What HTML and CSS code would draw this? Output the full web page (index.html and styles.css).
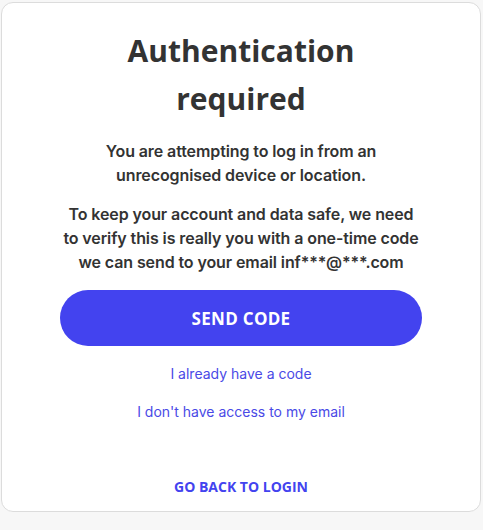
FILE: index.html
```html
<!DOCTYPE html>
<html lang="en">
<head>
<meta charset="utf-8">
<title>Authentication required</title>
<link rel="stylesheet" href="styles.css">
</head>
<body>
<main class="card">
  <h1 class="title">Authentication required</h1>
  <p class="text">You are attempting to log in from an unrecognised device or location.</p>
  <p class="text">To keep your account and data safe, we need to verify this is really you with a one-time code we can send to your email inf***@***.com</p>
  <button class="btn" type="button">SEND CODE</button>
  <a class="link" href="#">I already have a code</a>
  <a class="link link-second" href="#">I don't have access to my email</a>
  <a class="back" href="#">GO BACK TO LOGIN</a>
</main>
</body>
</html>
```
FILE: styles.css
```css
html, body {
  margin: 0;
  background: #f7f7f7;
}
body {
  padding: 2px 2px 0 1px;
  font-family: Inter, "Noto Sans", sans-serif;
  color: #333;
}
.card {
  box-sizing: border-box;
  width: 480px;
  height: 510px;
  background: #fff;
  border: 1px solid #dcdcdc;
  border-radius: 12px;
  padding: 24px 59px 0;
  display: flex;
  flex-direction: column;
  align-items: center;
  text-align: center;
}
.title {
  margin: 0 0 16px;
  width: 260px;
  font-family: "Open Sans", sans-serif;
  font-weight: 700;
  font-size: 30px;
  line-height: 48px;
  color: #333;
}
.text {
  margin: 0 0 15px;
  font-size: 16px;
  line-height: 24px;
  font-weight: 600;
  letter-spacing: -0.1px;
  color: #333;
}
.btn {
  margin-top: 1px;
  width: 362px;
  height: 56px;
  border: 0;
  border-radius: 28px;
  background: #4343ef;
  color: #fff;
  font-family: "Open Sans", sans-serif;
  font-weight: 700;
  font-size: 17px;
  letter-spacing: 0.3px;
  cursor: pointer;
}
.link {
  margin-top: 18px;
  font-size: 14px;
  line-height: 20px;
  color: #4a4ae6;
  text-decoration: none;
}
.link-second {
  margin-top: 18px;
}
.back {
  margin-top: 55px;
  font-family: "Open Sans", sans-serif;
  font-weight: 700;
  font-size: 14px;
  line-height: 20px;
  color: #4343ef;
  text-decoration: none;
}
```
